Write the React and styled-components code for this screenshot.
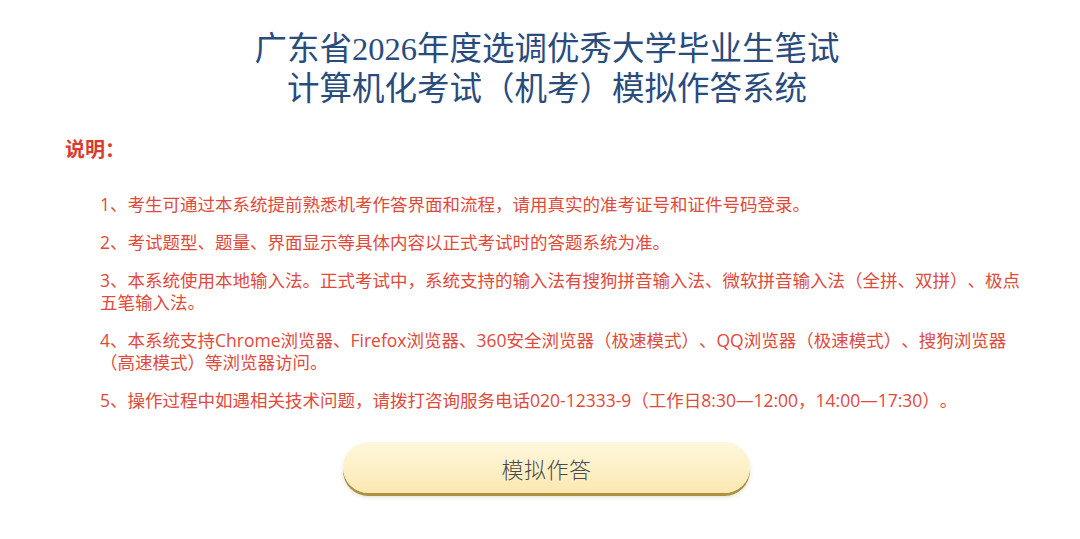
import React from "react";
import styled, { createGlobalStyle } from "styled-components";

const Global = createGlobalStyle`
  html, body { margin: 0; padding: 0; background: #ffffff; }
  body {
    font-family: "Noto Sans CJK SC", "Noto Sans", sans-serif;
    text-spacing-trim: space-all;
  }
`;

const Page = styled.div`
  width: 1080px;
  min-height: 539px;
  box-sizing: border-box;
  padding-top: 29px;
  display: flex;
  flex-direction: column;
`;

const Title = styled.h1`
  margin: 0;
  padding-left: 14px;
  text-align: center;
  font-family: "Liberation Serif", "Noto Sans CJK SC", serif;
  font-weight: 400;
  font-size: 32.5px;
  line-height: 40px;
  color: #2a4c7d;
  text-spacing-trim: space-all;
`;

const TitleLine = styled.span`
  display: block;
`;

const Notice = styled.h2`
  margin: 26px 0 0 65px;
  font-size: 20px;
  line-height: 28px;
  font-weight: 700;
  color: #d93b2d;
`;

const List = styled.ol`
  list-style: none;
  margin: 30px 0 0 100px;
  padding: 0;
  width: 932px;
  display: flex;
  flex-direction: column;
  gap: 16px;
`;

const Item = styled.li`
  font-family: "Open Sans", "Noto Sans CJK SC", sans-serif;
  font-size: 17.5px;
  line-height: 22px;
  color: #e04a3b;
  text-spacing-trim: space-all;
`;

const ButtonRow = styled.div`
  display: flex;
  justify-content: center;
  margin-top: 31px;
  padding-left: 13px;
`;

const StartButton = styled.button`
  width: 407px;
  height: 51px;
  border: none;
  border-radius: 26px;
  background: linear-gradient(180deg, #fef7dc 0%, #fdf0c6 55%, #fbe7b0 100%);
  box-shadow: 0 3px 0 #ab9140, 0 4px 4px rgba(90, 70, 10, 0.18);
  font-family: "Noto Sans CJK SC", sans-serif;
  font-size: 22px;
  font-weight: 300;
  color: #4a4a4a;
  letter-spacing: 0.5px;
  cursor: pointer;
`;

const items = [
  "1、考生可通过本系统提前熟悉机考作答界面和流程，请用真实的准考证号和证件号码登录。",
  "2、考试题型、题量、界面显示等具体内容以正式考试时的答题系统为准。",
  "3、本系统使用本地输入法。正式考试中，系统支持的输入法有搜狗拼音输入法、微软拼音输入法（全拼、双拼）、极点五笔输入法。",
  "4、本系统支持Chrome浏览器、Firefox浏览器、360安全浏览器（极速模式）、QQ浏览器（极速模式）、搜狗浏览器（高速模式）等浏览器访问。",
  "5、操作过程中如遇相关技术问题，请拨打咨询服务电话020-12333-9（工作日8:30—12:00，14:00—17:30）。",
];

export default function App() {
  return (
    <>
      <Global />
      <Page>
        <Title>
          <TitleLine>广东省2026年度选调优秀大学毕业生笔试</TitleLine>
          <TitleLine>计算机化考试（机考）模拟作答系统</TitleLine>
        </Title>
        <Notice>说明：</Notice>
        <List>
          {items.map((t) => (
            <Item key={t}>{t}</Item>
          ))}
        </List>
        <ButtonRow>
          <StartButton>模拟作答</StartButton>
        </ButtonRow>
      </Page>
    </>
  );
}
